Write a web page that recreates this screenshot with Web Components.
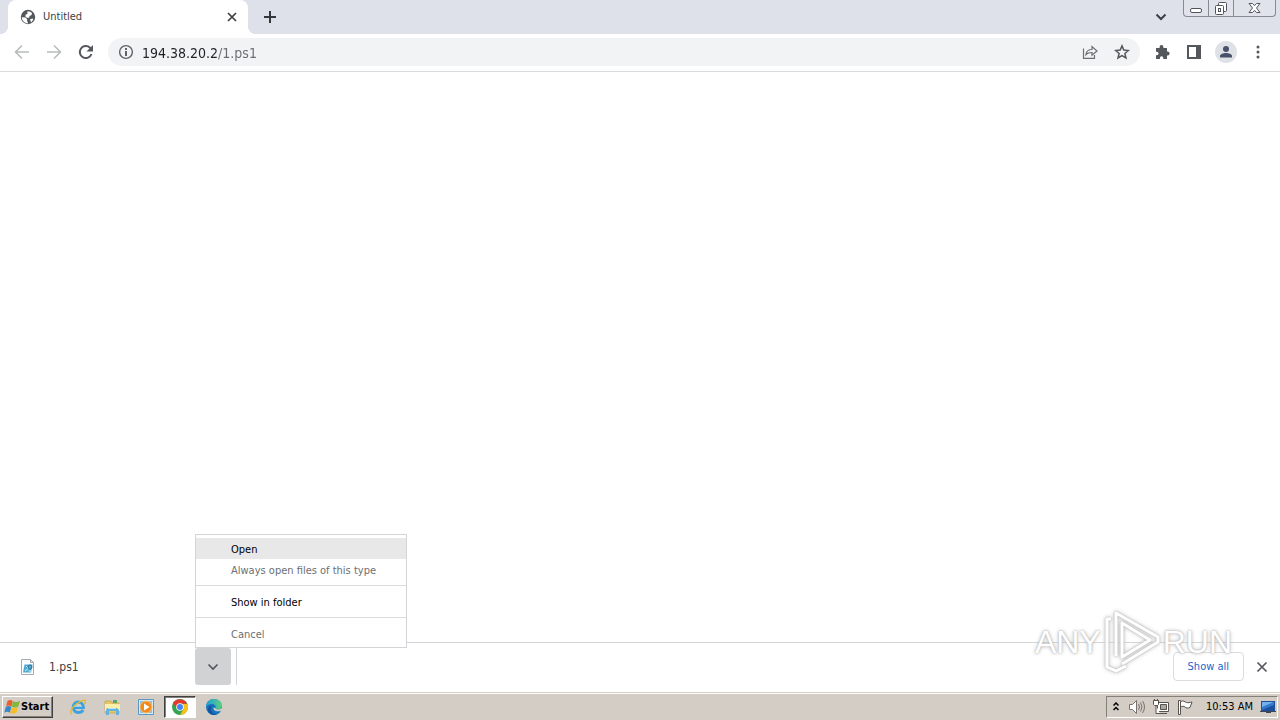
<!DOCTYPE html>
<html lang="en">
<head>
<meta charset="utf-8">
<title>Untitled</title>
<style>
    html, body {
        margin: 0;
        height: 100%;
        overflow: hidden;
    }

    body {
        font-family: "DejaVu Sans Condensed", "Noto Sans", sans-serif;
        font-size: 11px;
        line-height: 16px;
        color: #202124;
        background: #fff;
    }
</style>
</head>
<body>
<desktop-screen>
    <tab-strip slot="tabs"><browser-tab>Untitled</browser-tab></tab-strip>
    <browser-toolbar slot="toolbar" url="194.38.20.2/1.ps1"></browser-toolbar>
    <download-shelf slot="shelf">
        <download-item>1.ps1
            <download-menu slot="menu"></download-menu>
        </download-item>
    </download-shelf>
    <run-watermark slot="mark"></run-watermark>
    <task-bar slot="taskbar"><system-tray>10:53 AM</system-tray></task-bar>
</desktop-screen>

<script>
class BaseElement extends HTMLElement {
    constructor() {
        super();
        const shadow = this.attachShadow({ mode: 'open' });
        shadow.innerHTML = `
            <style>
                * { box-sizing: border-box; }
                button {
                    display: flex;
                    align-items: center;
                    justify-content: center;
                    margin: 0;
                    padding: 0;
                    border: 0;
                    background: none;
                    color: inherit;
                    font: inherit;
                }
                svg { display: block; flex: none; }
            </style>` + this.render();
    }
}

// Whole screen: browser window on top, taskbar below
customElements.define('desktop-screen', class extends BaseElement {
    render() {
        return `
            <style>
                :host { display: flex; flex-direction: column; height: 100vh; position: relative; }
                main { flex: 1; min-height: 0; background: #fff; }
            </style>
            <slot name="tabs"></slot>
            <slot name="toolbar"></slot>
            <main></main>
            <slot name="shelf"></slot>
            <slot name="taskbar"></slot>
            <slot name="mark"></slot>`;
    }
});

customElements.define('tab-strip', class extends BaseElement {
    render() {
        return `
            <style>
                :host { display: flex; height: 34px; padding: 0 4px 0 8px; background: #dee1e9; }
                .new { width: 28px; height: 34px; margin-left: 8px; }
                .space { flex: 1; }
                .search { width: 24px; height: 34px; margin-right: 10px; }
                .caption {
                    display: flex;
                    height: 17px;
                    border: 1px solid #868a92;
                    border-top: 0;
                    border-radius: 0 0 4px 4px;
                    background: #e0e3ea;
                }
                .caption button { width: 25px; }
                .caption button:first-child { width: 24px; }
                .caption button + button { border-left: 1px solid #868a92; }
                .caption .close { width: 42px; }
            </style>
            <slot></slot>
            <button class="new" aria-label="New tab">
                <svg width="14" height="14" stroke="#34373c" stroke-width="2"><path d="M7 1v12M1 7h12"/></svg>
            </button>
            <div class="space"></div>
            <button class="search" aria-label="Search tabs">
                <svg width="12" height="8" fill="none" stroke="#3c4043" stroke-width="2"><path d="M1.500 1.500 6 6l4.500-4.500"/></svg>
            </button>
            <div class="caption">
                <button aria-label="Minimize">
                    <svg width="13" height="14" fill="#fff" stroke="#50555d"><rect x=".5" y="7.500" width="11" height="4" rx="1.500"/></svg>
                </button>
                <button aria-label="Restore">
                    <svg width="14" height="15" fill="#fff" stroke="#50555d"><rect x="4.500" y="1.500" width="8" height="9" rx="1"/><rect x="1.500" y="4.500" width="8" height="9" rx="1"/><rect x="4.500" y="7.500" width="2" height="3"/></svg>
                </button>
                <button class="close" aria-label="Close window">
                    <svg width="13" height="12" fill="#fff" stroke="#50555d"><path d="M1 1.500h3.500l2 2.200 2-2.200H12L8.500 6l3.500 4.500H8.500l-2-2.200-2 2.200H1L4.500 6z"/></svg>
                </button>
            </div>`;
    }
});

customElements.define('browser-tab', class extends BaseElement {
    render() {
        return `
            <style>
                :host {
                    position: relative;
                    display: flex;
                    align-items: center;
                    width: 240px;
                    padding: 0 8px 0 12px;
                    box-sizing: border-box;
                    border-radius: 8px 8px 0 0;
                    background: #fff;
                    color: #3c4043;
                }
                /* flared feet of the active tab */
                :host::before, :host::after {
                    content: "";
                    position: absolute;
                    bottom: 0;
                    width: 8px;
                    height: 8px;
                }
                :host::before { right: 100%; background: radial-gradient(circle at 0 0, transparent 8px, #fff 8px); }
                :host::after { left: 100%; background: radial-gradient(circle at 100% 0, transparent 8px, #fff 8px); }
                .title { flex: 1; margin-left: 7px; }
                button { width: 16px; height: 16px; }
            </style>
            <svg width="16" height="16" viewBox="0 0 16 16">
                <circle cx="8" cy="8" r="7.200" fill="#54575b"/>
                <path fill="#fff" d="M7.200 2.500h2.600l2.200 1.600-.4 2-2 .8-.5 1.800H6.800L5.300 7.300l.4-1.800 1.800-.5zM1.800 8.300l3.800.2 1.600 1.800-.2 1.800.8.8v1.500C4.500 14.100 2 11.800 1.800 8.300zM10 10.300l2.700-.8.7.9-2.300 3z"/>
            </svg>
            <span class="title"><slot></slot></span>
            <button aria-label="Close tab">
                <svg width="10" height="10" stroke="#3c4043" stroke-width="1.700"><path d="m1 1 8 8M9 1 1 9"/></svg>
            </button>`;
    }
});

customElements.define('browser-toolbar', class extends BaseElement {
    render() {
        return `
            <style>
                :host {
                    display: flex;
                    align-items: center;
                    height: 38px;
                    padding: 0 6px 2px;
                    box-sizing: border-box;
                    border-bottom: 1px solid #d9dbdd;
                    background: #fff;
                }
                button { width: 32px; height: 28px; }
                .omnibox {
                    flex: 1;
                    display: flex;
                    align-items: center;
                    height: 28px;
                    margin: 0 6px;
                    padding: 0 2px 0 10px;
                    border-radius: 14px;
                    background: #f1f3f4;
                }
                .omnibox .info { width: 16px; }
                /* host part dark, path part grey */
                input {
                    flex: 1;
                    min-width: 0;
                    height: 24px;
                    margin: 0 0 0 8px;
                    padding: 2px 0 0;
                    border: 0;
                    outline: 0;
                    font: inherit;
                    font-size: 14px;
                    color: transparent;
                    background: linear-gradient(90deg, #202124 76px, #686c70 76px);
                    background-clip: text;
                    -webkit-background-clip: text;
                }
            </style>
            <button aria-label="Back">
                <svg width="16" height="16" fill="none" stroke="#b9bbbd" stroke-width="1.600"><path d="M15 8H2M8 1.500 1.500 8 8 14.500"/></svg>
            </button>
            <button aria-label="Forward">
                <svg width="16" height="16" fill="none" stroke="#b9bbbd" stroke-width="1.600"><path d="M1 8h13M8 1.500 14.500 8 8 14.500"/></svg>
            </button>
            <button aria-label="Reload">
                <svg width="16" height="16" fill="none" stroke="#54575b" stroke-width="2"><path d="M13.500 10A6 6 0 1 1 12 3.700L14 6"/><path fill="#54575b" stroke="none" d="M15 1v6.500H8.500z"/></svg>
            </button>
            <div class="omnibox">
                <button class="info" aria-label="View site information">
                    <svg width="16" height="16" fill="none" stroke="#5f6368"><circle cx="8" cy="8" r="6.400" stroke-width="1.400"/><path d="M8 7v5M8 4v2" stroke-width="2"/></svg>
                </button>
                <input type="text" aria-label="Address">
                <button aria-label="Share">
                    <svg width="16" height="16" fill="none" stroke="#6b6f73" stroke-width="1.200"><path d="M1.500 4.500v9.900h11V11M4 10.500c.4-3.500 2.500-5 6-5V2.500l5 4.500-5 4.300V8.500c-3 0-4.800.6-6 2z"/></svg>
                </button>
                <button aria-label="Bookmark this tab">
                    <svg width="16" height="16" fill="none" stroke="#54575b" stroke-width="1.500"><path d="m8 1.900 1.800 4.200 4.600.4-3.500 3 1.100 4.500L8 11.600 4 14l1.100-4.500-3.500-3 4.600-.4z"/></svg>
                </button>
            </div>
            <button aria-label="Extensions">
                <svg width="16" height="16" fill="#54575b"><path d="M2 4h3.600V3a1.900 1.900 0 0 1 3.800 0v1H13v3.600h.7a1.900 1.900 0 0 1 0 3.800H13V15H9.300v-1a1.700 1.700 0 0 0-3.400 0v1H2v-3.700h.8a1.700 1.700 0 0 0 0-3.500H2z"/></svg>
            </button>
            <button aria-label="Side panel">
                <svg width="16" height="16"><path fill="#54575b" d="M1 1h14v14H1z"/><path fill="#fff" d="M3 3h7v10H3z"/></svg>
            </button>
            <button aria-label="Profile">
                <svg width="22" height="22"><circle cx="11" cy="11" r="11" fill="#dee1e6"/><circle cx="11" cy="8" r="3" fill="#47516a"/><path fill="#47516a" d="M5 16.500v-1.600c0-2 3.500-3 6-3s6 1 6 3v1.600z"/></svg>
            </button>
            <button aria-label="Menu">
                <svg width="4" height="16" fill="#54575b"><circle cx="2" cy="3" r="1.500"/><circle cx="2" cy="8" r="1.500"/><circle cx="2" cy="13" r="1.500"/></svg>
            </button>`;
    }

    connectedCallback() {
        this.shadowRoot.querySelector('input').value = this.getAttribute('url');
    }
});

customElements.define('download-shelf', class extends BaseElement {
    render() {
        return `
            <style>
                :host {
                    display: flex;
                    align-items: center;
                    height: 50px;
                    padding: 0 10px 2px 0;
                    box-sizing: border-box;
                    border-top: 1px solid #d3d5d8;
                    background: #fff;
                }
                .space { flex: 1; }
                .all {
                    height: 29px;
                    padding: 0 14px;
                    border: 1px solid #dadce0;
                    border-radius: 4px;
                    color: #1a67c9;
                }
                .close { width: 16px; height: 16px; margin-left: 10px; }
            </style>
            <slot></slot>
            <div class="space"></div>
            <button class="all">Show all</button>
            <button class="close" aria-label="Close downloads bar">
                <svg width="12" height="12" stroke="#54575b" stroke-width="1.700"><path d="m1.500 1.500 9 9M10.500 1.500l-9 9"/></svg>
            </button>`;
    }
});

customElements.define('download-item', class extends BaseElement {
    render() {
        return `
            <style>
                :host {
                    position: relative;
                    display: flex;
                    align-items: center;
                    width: 237px;
                    height: 37px;
                    padding: 0 5px 0 20px;
                    box-sizing: border-box;
                    border-right: 1px solid #d3d5d8;
                }
                .name { flex: 1; margin-left: 13px; font-size: 12px; color: #3c4043; }
                button { width: 36px; height: 37px; border-radius: 3px; background: #d1d2d3; }
            </style>
            <svg width="16" height="16" viewBox="0 0 16 16">
                <path fill="#fdfdfd" stroke="#a5abb1" d="M1.500.5h9l3 3v12h-12z"/>
                <path fill="#e3e7ea" stroke="#a5abb1" d="M10.500.5v3h3z"/>
                <path fill="#4fa9cf" d="M4.500 5.500h8L11 13.500H3z"/>
                <path fill="none" stroke="#d8f2fb" d="m6 7 2.500 2.400L5 12M8.500 12H11"/>
                <circle cx="10" cy="8" r="2" fill="none" stroke="#2a7198"/>
            </svg>
            <span class="name"><slot></slot></span>
            <button aria-label="Download options" aria-expanded="true">
                <svg width="12" height="8" fill="none" stroke="#54575b" stroke-width="1.700"><path d="m1.500 1.500 4.500 4.500 4.500-4.500"/></svg>
            </button>
            <slot name="menu"></slot>`;
    }
});

customElements.define('download-menu', class extends BaseElement {
    render() {
        return `
            <style>
                :host {
                    position: absolute;
                    left: 195px;
                    bottom: 100%;
                    width: 212px;
                    box-sizing: border-box;
                    padding: 3px 0;
                    border: 1px solid #d3d5d8;
                    background: #fff;
                    font-size: 11px;
                    color: #000;
                }
                button { width: 100%; height: 21px; padding: 3px 0 0 35px; justify-content: flex-start; white-space: nowrap; }
                .active { background: #e8e8e9; }
                .off { color: #6d6f72; }
                hr { height: 1px; margin: 5px 0; border: 0; background: #d9dbdd; }
            </style>
            <div role="menu">
                <button class="active" role="menuitem">Open</button>
                <button class="off" role="menuitem">Always open files of this type</button>
                <hr>
                <button role="menuitem">Show in folder</button>
                <hr>
                <button class="off" role="menuitem">Cancel</button>
            </div>`;
    }
});

customElements.define('run-watermark', class extends BaseElement {
    render() {
        return `
            <style>
                :host {
                    position: absolute;
                    right: 48px;
                    bottom: 46px;
                    display: flex;
                    align-items: center;
                    gap: 2px;
                    font: 32px/32px "Liberation Sans Narrow", "Liberation Sans", sans-serif;
                    color: #fff;
                    text-shadow: 0 0 2px #aaa, 0 0 4px #bbb;
                    pointer-events: none;
                }
                svg { filter: drop-shadow(0 0 1px #b4b4b4) drop-shadow(0 0 2px #ccc); }
            </style>
            <span>ANY</span>
            <svg width="58" height="64" viewBox="0 0 58 64" fill="none" stroke="#fff" stroke-width="3" stroke-linejoin="round">
                <path d="M13 46V3l42 24v5L19 54"/>
                <path d="M19 13v34l28-17zM8 9H4v48l9 4 10-5"/>
            </svg>
            <span>RUN</span>`;
    }
});

customElements.define('task-bar', class extends BaseElement {
    render() {
        return `
            <style>
                :host {
                    display: flex;
                    align-items: center;
                    height: 28px;
                    padding: 1px 2px 0;
                    box-sizing: border-box;
                    border-top: 1px solid #d4d0c8;
                    background: #d4cdc6;
                    box-shadow: inset 0 1px #fff;
                    color: #000;
                }
                .start {
                    height: 22px;
                    padding: 0 3px 0 1px;
                    border: 1px solid;
                    border-color: #fff #404040 #404040 #fff;
                    box-shadow: inset -1px -1px #858078;
                    font-weight: bold;
                }
                nav { display: flex; flex: 1; margin-left: 9px; gap: 2px; }
                nav button { width: 32px; height: 22px; }
                nav .running {
                    border: 1px solid;
                    border-color: #404040 #fff #fff #404040;
                    box-shadow: inset 1px 1px #858078;
                    background: #fff;
                }
            </style>
            <button class="start">
                <svg width="17" height="16" viewBox="0 0 17 16">
                    <path fill="#e8602c" d="M3.500 2C5.500.5 7 .8 8.800 2L7.500 7.500C5.600 6.500 4 6.200 2 7.400z"/>
                    <path fill="#7fb83d" d="M9 2.300c2 1 4.400 1 7-.5l-1.700 5.700c-2 1.400-4.400 1.300-6.500.3z"/>
                    <path fill="#3487c9" d="M1.800 8c1.800-1.200 3.600-1.200 5.500 0l-1.500 5.700c-1.600-1.200-3.600-1.300-5.500 0z"/>
                    <path fill="#f5bd28" d="M7.600 8.300c2 1 4.400 1 6.600-.4l-1.600 5.600c-2 1.500-4.400 1.400-6.500.4z"/>
                </svg>
                Start
            </button>
            <nav>
                <button aria-label="Internet Explorer">
                    <svg width="18" height="18" viewBox="0 0 18 18" fill="none">
                        <path stroke="#3ba2df" stroke-width="3" d="M4.500 9.500h9.800C14.200 6 12 4 9.300 4a5.300 5.300 0 1 0 4.800 8"/>
                        <path stroke="#a9def5" d="M5 8.300h8"/>
                        <path stroke="#e9b92f" stroke-width="1.500" d="M3 16c-3-1 0-7 5-10.500S17 1 16.500 3.700c-.1.800-.5 1.500-1 2.300"/>
                    </svg>
                </button>
                <button aria-label="Windows Explorer">
                    <svg width="18" height="18" viewBox="0 0 18 18">
                        <path fill="#e7c765" stroke="#bf9b42" stroke-width=".6" d="M2 3h6l1 2h7v10H2z"/>
                        <path fill="#fbedaa" d="M2 6h15v7H2z"/>
                        <path fill="#5da765" d="M10 2h4v3h-4z"/>
                        <path fill="#63b3dd" d="M4 10h10l2 2v5h-3v-4H6v4H3v-5z"/>
                        <path fill="#b7e3f6" d="M5 10h8v1H5z"/>
                    </svg>
                </button>
                <button aria-label="Media Player">
                    <svg width="18" height="18" viewBox="0 0 18 18">
                        <path fill="#d8eaf7" stroke="#579ac9" d="M1.500 1.500h15v15h-15z"/>
                        <path fill="#8fc0e0" d="M3 3h12v12H3z"/>
                        <circle cx="9" cy="9" r="6" fill="#f38a1d" stroke="#fbc06c"/>
                        <path fill="#fff" d="M7 5.500 12.500 9 7 12.500z"/>
                    </svg>
                </button>
                <button class="running" aria-label="Chrome">
                    <svg width="16" height="16" viewBox="0 0 16 16">
                        <circle cx="8" cy="8" r="8" fill="#34a353"/>
                        <path fill="#fbc116" d="M15.500 5A8 8 0 0 1 8 16l3.500-6L8 5z"/>
                        <path fill="#e33b2e" d="M1.100 4a8 8 0 0 1 14 .8H8L4.800 9.500z"/>
                        <circle cx="8" cy="8" r="3.800" fill="#fff"/>
                        <circle cx="8" cy="8" r="3" fill="#4285f4"/>
                    </svg>
                </button>
                <button aria-label="Edge">
                    <svg width="18" height="18" viewBox="0 0 18 18">
                        <defs>
                            <linearGradient id="wave"><stop stop-color="#249bd8"/><stop offset="1" stop-color="#5bd27b"/></linearGradient>
                        </defs>
                        <circle cx="9" cy="9" r="8" fill="#1573c0"/>
                        <path fill="url(#wave)" d="M1 9C1 4 4.500 1 9 1c4.700 0 8 3 8 6.500 0 2.500-2 4-4.500 4-1.500 0-2.500-.5-2-1.300C11.500 8 9.500 6 7 6 4 6 1.500 7.500 1 9z"/>
                        <path fill="#12539c" d="M6 9.500c-.8 4 2.200 7 6 6.900C7 18.500 2.500 15 3 11c.3-2 2-3.500 4.500-3.500C6.700 8 6.200 8.700 6 9.500z"/>
                        <path fill="#d4cdc6" d="M8.500 9.500c-.5 3 3 4.800 7.500 3.200l2-1.200V8.500C17 10.800 15 11.600 12.500 11.500c-1.800-.1-2.300-.6-1.900-1.400z"/>
                    </svg>
                </button>
            </nav>
            <slot></slot>`;
    }
});

customElements.define('system-tray', class extends BaseElement {
    render() {
        return `
            <style>
                :host {
                    display: flex;
                    align-items: center;
                    height: 22px;
                    padding: 0 1px 0 4px;
                    box-sizing: border-box;
                    border: 1px solid;
                    border-color: #858078 #fff #fff #858078;
                }
                button { width: 24px; height: 20px; }
                .more { width: 10px; margin-right: 4px; }
                .clock { margin: 0 7px 0 9px; white-space: nowrap; }
                .desktop { width: 16px; }
            </style>
            <button class="more" aria-label="Show hidden icons">
                <svg width="6" height="10" fill="none" stroke="#000" stroke-width="1.500"><path d="m.5 3.500 2.500-2.500 2.500 2.500M.5 8 3 5.500 5.500 8"/></svg>
            </button>
            <button aria-label="Volume">
                <svg width="18" height="16" fill="none" stroke="#77736e"><path fill="#fff" d="M1.500 5.500h3l4-4v13l-4-4h-3z"/><path d="M10.500 5q2 3 0 6M12.500 3.500q3 4.500 0 9M14.500 2q4 6 0 12"/></svg>
            </button>
            <button aria-label="Network">
                <svg width="18" height="16" fill="#fff" stroke="#56534f"><path d="M5.500 3.500h11v9h-11z"/><path fill="#aaa6a0" d="M8.500 5.500h6v5h-6zM8 14.500h7"/><path d="M1.500 1.500h5v4l-1 1h-3l-1-1zM2.500 0v2M5.500 0v2M4 6.500v8h4"/></svg>
            </button>
            <button aria-label="Action Center">
                <svg width="18" height="16" fill="#fff" stroke="#56534f"><path d="M2.500 1.500h2v14h-2z"/><path d="M4.500 2.500c3-1.500 4 .5 6 1s3 0 5.500-.5l-2 5.500c-2 1-4 .5-5-.5s-2.500-1-4.500 0z"/></svg>
            </button>
            <span class="clock"><slot></slot></span>
            <button class="desktop" aria-label="Show desktop">
                <svg width="16" height="14"><path fill="#1d4e9f" d="M1 1h14v10H1z"/><path fill="#72b2eb" d="M2 2h12L2 9z"/><path fill="#347acb" d="M2 10V7l12-5v3z"/><path fill="#3d4653" d="M0 11h16v1H0zM6 12h5v1H6z"/></svg>
            </button>`;
    }
});
</script>
</body>
</html>
